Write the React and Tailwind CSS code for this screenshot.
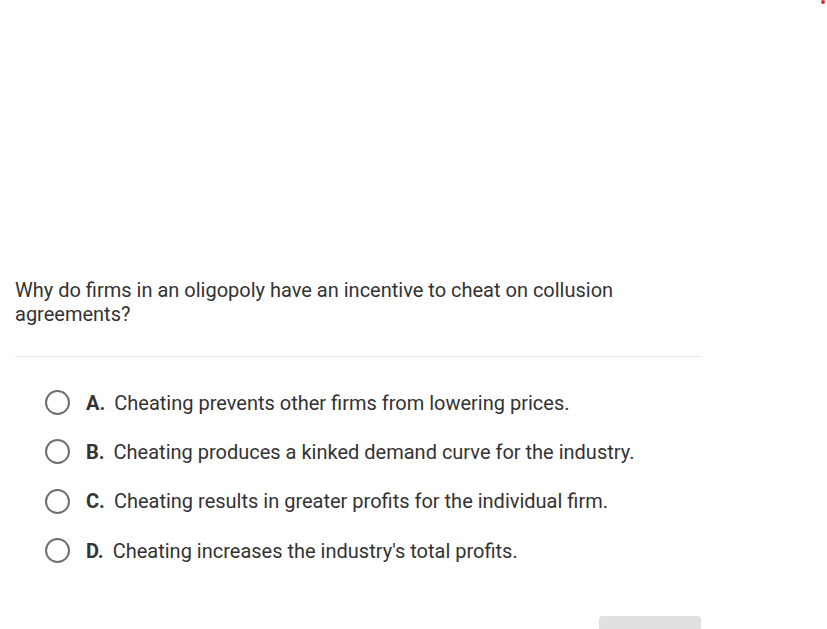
import React from "react";

const options = [
  { letter: "A.", text: "Cheating prevents other firms from lowering prices." },
  { letter: "B.", text: "Cheating produces a kinked demand curve for the industry." },
  { letter: "C.", text: "Cheating results in greater profits for the individual firm." },
  { letter: "D.", text: "Cheating increases the industry's total profits." },
];

function App() {
  return (
    <div
      className="relative h-[629px] w-[827px] overflow-hidden bg-white text-[#333333]"
      style={{ fontFamily: "Roboto, 'Liberation Sans', sans-serif" }}
    >
      <span className="absolute right-[2px] top-[0px] h-[4px] w-[4px] rounded-full bg-[#d32f2f]" />
      <div className="h-[278px]" />
      <div className="w-[701px] pl-[15px]">
        <p className="text-[20px] leading-[24px]">
          Why do firms in an oligopoly have an incentive to cheat on collusion
          agreements?
        </p>
        <div className="mt-[30px] h-px bg-[#e4e4e4]" />
        <ul className="mt-[21px]">
          {options.map((o) => (
            <li key={o.letter} className="flex h-[49.3px] items-center">
              <span className="ml-[30px] h-[25px] w-[25px] rounded-full border-2 border-[#6e6e6e]" />
              <span className="ml-[16px] text-[20px] font-bold">{o.letter}</span>
              <span className="ml-[9px] text-[20px]">{o.text}</span>
            </li>
          ))}
        </ul>
        <div className="mt-[41px] flex justify-end">
          <div className="h-[20px] w-[102px] rounded-t-[4px] bg-[#e0e0e0]" />
        </div>
      </div>
    </div>
  );
}

export default App;
